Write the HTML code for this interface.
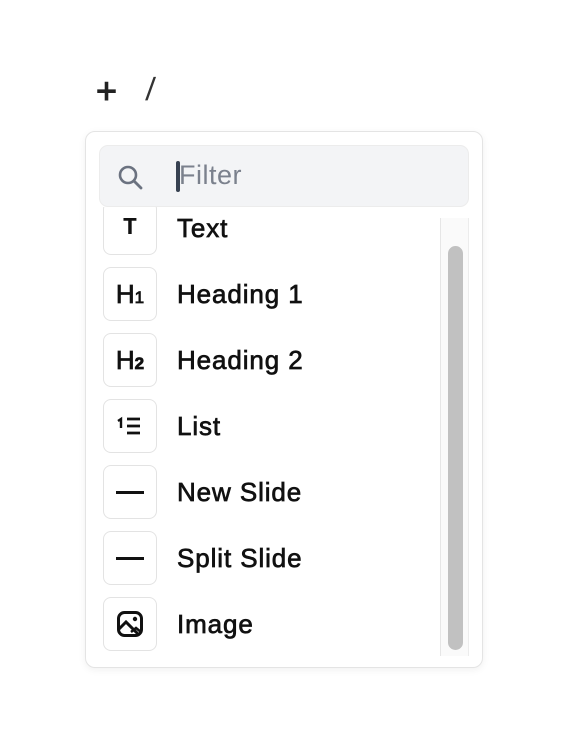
<!DOCTYPE html>
<html><head><style>
body{margin:0;width:572px;height:752px;background:#fff;font-family:"Liberation Sans",sans-serif;position:relative;overflow:hidden}
.a{position:absolute}
.pop{left:85px;top:131px;width:396px;height:535px;border:1px solid #e4e4e4;border-radius:10px;box-shadow:0 2px 8px rgba(0,0,0,.06);background:#fff}
.search{left:99px;top:145px;width:370px;height:62px;background:#f3f4f6;border-radius:9px;border:1px solid #ececec;box-sizing:border-box}
.list{left:86px;top:207px;width:354px;height:449px;overflow:hidden}
.row{position:absolute;left:17px;height:54px;width:320px}
.ib{position:absolute;left:0;top:0;width:52px;height:52px;border:1px solid #e3e3e3;border-radius:8px;display:flex;align-items:center;justify-content:center;font-size:26px;color:#111}
.h{-webkit-text-stroke:0.8px #111}
.lb{position:absolute;left:74px;top:12px;font-size:26px;font-weight:normal;-webkit-text-stroke:0.7px #111;letter-spacing:0.9px;color:#111}
</style></head><body>
<div class="a" style="left:96px;top:70px;font-size:36px;color:#222;-webkit-text-stroke:1px #222">+</div>
<div class="a" style="left:146px;top:71px;font-size:32px;color:#333;transform:skewX(-5deg)">/</div>
<div class="a pop"></div>
<div class="a search">
<svg class="a" style="left:17px;top:18px" width="28" height="28" viewBox="0 0 28 28"><circle cx="11" cy="11" r="8" fill="none" stroke="#6b7280" stroke-width="2.6"/><path d="M17 17l7 7" stroke="#6b7280" stroke-width="2.8" stroke-linecap="round"/></svg>
<div class="a" style="left:76px;top:15px;width:4px;height:31px;background:#374151;border-radius:2px"></div>
<div class="a" style="left:79px;top:14px;font-size:27px;color:#7b818d;letter-spacing:0.5px">Filter</div>
</div>
<div class="a list">
<div class="row" style="top:-6px"><div class="ib" style="font-family:'Liberation Mono',monospace;font-weight:bold;font-size:24px">T</div><div class="lb">Text</div></div>
<div class="row" style="top:60px"><div class="ib h">H<span style="font-size:17px;margin-top:7px">1</span></div><div class="lb">Heading 1</div></div>
<div class="row" style="top:126px"><div class="ib h">H<span style="font-size:17px;margin-top:7px;font-weight:bold">2</span></div><div class="lb">Heading 2</div></div>
<div class="row" style="top:192px"><div class="ib"><svg width="28" height="20" viewBox="0 0 28 20"><path d="M2 5l3-2v9" stroke="#111" stroke-width="2.4" fill="none"/><path d="M11 3h13M11 10h13M11 17h13" stroke="#111" stroke-width="2.8"/></svg></div><div class="lb">List</div></div>
<div class="row" style="top:258px"><div class="ib"><div style="width:28px;height:3px;background:#111"></div></div><div class="lb">New Slide</div></div>
<div class="row" style="top:324px"><div class="ib"><div style="width:28px;height:3px;background:#111"></div></div><div class="lb">Split Slide</div></div>
<div class="row" style="top:390px"><div class="ib"><svg width="28" height="28" viewBox="0 0 28 28"><rect x="2.5" y="2.5" width="23" height="23" rx="6" fill="none" stroke="#111" stroke-width="3"/><path d="M3 19l7-7 12 12" stroke="#111" stroke-width="3" fill="none"/><path d="M15 22l5-4 5 4" stroke="#111" stroke-width="2.5" fill="none"/><circle cx="19" cy="9" r="2.2" fill="#111"/></svg></div><div class="lb">Image</div></div>
</div>
<div class="a" style="left:440px;top:218px;width:29px;height:438px;background:#fafafa;border-left:1px solid #e6e6e6;border-right:1px solid #ececec;box-sizing:border-box"></div>
<div class="a" style="left:448px;top:246px;width:15px;height:404px;background:#c1c1c1;border-radius:8px"></div>
</body></html>
